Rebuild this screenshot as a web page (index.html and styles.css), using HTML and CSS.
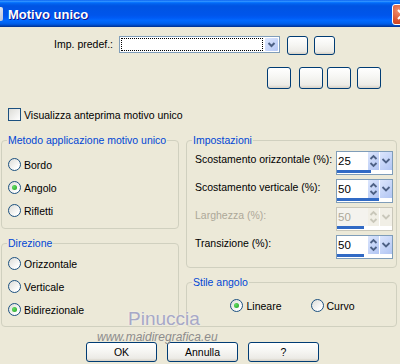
FILE: index.html
```html
<!DOCTYPE html>
<html lang="it">
<head>
  <meta charset="UTF-8">
  <meta name="viewport" content="width=device-width, initial-scale=1.0">
  <title>Motivo unico</title>
  <link rel="stylesheet" href="styles.css">
</head>
<body>

  <div class="dialog">

    <!-- Title bar -->
    <div class="titlebar">
      <span class="app-icon"></span>
      <span class="title">Motivo unico</span>
      <span class="close-btn">
        <svg width="21" height="21" viewBox="0 0 21 21"><path d="M6 6 L15 15 M15 6 L6 15" stroke="#fff" stroke-width="2" fill="none"/></svg>
      </span>
    </div>

    <!-- Preset row -->
    <div class="preset-row">
      <span class="preset-label">Imp. predef.:</span>
      <div class="combo">
        <div class="combo-field"></div>
        <span class="drop-btn">
          <svg width="13" height="13" viewBox="0 0 13 13"><polyline points="3.5,5 6.5,8 9.5,5" stroke="#4d6185" stroke-width="2" fill="none"/></svg>
        </span>
      </div>
      <button class="xp-btn small-btn"></button>
      <button class="xp-btn small-btn"></button>
    </div>

    <!-- Tool buttons -->
    <div class="tool-row">
      <button class="xp-btn tool-btn"></button>
      <button class="xp-btn tool-btn wide-gap"></button>
      <button class="xp-btn tool-btn"></button>
      <button class="xp-btn tool-btn mid-gap"></button>
    </div>

    <label class="check-row"><span class="checkbox"></span>Visualizza anteprima motivo unico</label>

    <div class="groups">
      <div class="col col-left">
        <fieldset class="group group-method">
          <legend>Metodo applicazione motivo unico</legend>
          <div class="radio-list">
            <div class="radio-row"><span class="radio"></span>Bordo</div>
            <div class="radio-row"><span class="radio checked"></span>Angolo</div>
            <div class="radio-row"><span class="radio"></span>Rifletti</div>
          </div>
        </fieldset>

        <fieldset class="group group-dir">
          <legend>Direzione</legend>
          <div class="radio-list">
            <div class="radio-row"><span class="radio"></span>Orizzontale</div>
            <div class="radio-row"><span class="radio"></span>Verticale</div>
            <div class="radio-row"><span class="radio checked"></span>Bidirezionale</div>
          </div>
        </fieldset>
      </div>

      <div class="col col-right">
        <fieldset class="group group-settings">
          <legend>Impostazioni</legend>
          <div class="field-list">
            <div class="field-row">
              <span class="field-label">Scostamento orizzontale (%):</span>
              <div class="spin">
                <div class="spin-top">
                  <span class="spin-value">25</span>
                  <span class="spin-arrows"><svg width="11" height="18" viewBox="0 0 11 18"><polyline points="2.5,7 5.5,4 8.5,7" /><polyline points="2.5,11 5.5,14 8.5,11" /></svg></span>
                  <span class="spin-drop"><svg width="12" height="18" viewBox="0 0 12 18"><polyline points="2.5,7 6,10.5 9.5,7" /></svg></span>
                </div>
                <div class="spin-bar"><span style="width:34px"></span></div>
              </div>
            </div>
            <div class="field-row">
              <span class="field-label">Scostamento verticale (%):</span>
              <div class="spin">
                <div class="spin-top">
                  <span class="spin-value">50</span>
                  <span class="spin-arrows"><svg width="11" height="18" viewBox="0 0 11 18"><polyline points="2.5,7 5.5,4 8.5,7" /><polyline points="2.5,11 5.5,14 8.5,11" /></svg></span>
                  <span class="spin-drop"><svg width="12" height="18" viewBox="0 0 12 18"><polyline points="2.5,7 6,10.5 9.5,7" /></svg></span>
                </div>
                <div class="spin-bar"><span style="width:42px"></span></div>
              </div>
            </div>
            <div class="field-row disabled">
              <span class="field-label">Larghezza (%):</span>
              <div class="spin">
                <div class="spin-top">
                  <span class="spin-value">50</span>
                  <span class="spin-arrows"><svg width="11" height="18" viewBox="0 0 11 18"><polyline points="2.5,7 5.5,4 8.5,7" /><polyline points="2.5,11 5.5,14 8.5,11" /></svg></span>
                  <span class="spin-drop"><svg width="12" height="18" viewBox="0 0 12 18"><polyline points="2.5,7 6,10.5 9.5,7" /></svg></span>
                </div>
                <div class="spin-bar"><span style="width:27px"></span></div>
              </div>
            </div>
            <div class="field-row">
              <span class="field-label">Transizione (%):</span>
              <div class="spin">
                <div class="spin-top">
                  <span class="spin-value">50</span>
                  <span class="spin-arrows"><svg width="11" height="18" viewBox="0 0 11 18"><polyline points="2.5,7 5.5,4 8.5,7" /><polyline points="2.5,11 5.5,14 8.5,11" /></svg></span>
                  <span class="spin-drop"><svg width="12" height="18" viewBox="0 0 12 18"><polyline points="2.5,7 6,10.5 9.5,7" /></svg></span>
                </div>
                <div class="spin-bar"><span style="width:27px"></span></div>
              </div>
            </div>
          </div>
        </fieldset>

        <fieldset class="group group-corner">
          <legend>Stile angolo</legend>
          <div class="corner-options">
            <div class="radio-row"><span class="radio checked"></span>Lineare</div>
            <div class="radio-row"><span class="radio"></span>Curvo</div>
          </div>
        </fieldset>
      </div>
    </div>

    <!-- Dialog buttons -->
    <div class="actions">
      <button class="xp-btn action-btn">OK</button>
      <button class="xp-btn action-btn">Annulla</button>
      <button class="xp-btn action-btn">?</button>
    </div>

    <!-- Watermark over the bottom -->
    <div class="watermark">
      <div class="wm-name">Pinuccia</div>
      <div class="wm-site">www.maidiregrafica.eu</div>
    </div>

  </div>

</body>
</html>
```

FILE: styles.css
```css
/* Base */
* {
  margin: 0;
  padding: 0;
  box-sizing: border-box;
}

body {
  width: 400px;
  height: 364px;
  overflow: hidden;
  background-color: #ece9d8;
  font-family: 'Liberation Sans', Arial, sans-serif;
  font-size: 10.5px;
  color: #000;
}

.dialog {
  position: relative;
  height: 364px;
}

/* Title bar */
.titlebar {
  height: 27px;
  display: flex;
  align-items: center;
  background: linear-gradient(to bottom,
    #0058ee 0%, #3593ff 4%, #288eff 6%, #127dff 8%, #036ffc 10%,
    #0262ee 14%, #0057e5 20%, #0054e3 24%, #0055eb 56%, #005bf5 66%,
    #026afe 76%, #0062ef 86%, #0052d6 92%, #0040ab 96%, #003092 100%);
}

.app-icon {
  width: 16px;
  height: 14px;
  margin-left: -13px;
  margin-top: 1px;
  border-radius: 2px;
  background: linear-gradient(135deg, #ffffff, #b9c3d6);
}

.title {
  margin-left: 5px;
  padding-top: 2px;
  font-size: 13px;
  font-weight: bold;
  color: #fff;
  text-shadow: 1px 1px #0f1089;
}

.close-btn {
  margin-left: auto;
  margin-right: -13px;
  margin-top: 2px;
  width: 21px;
  height: 21px;
  border: 1px solid #fff;
  border-radius: 3px;
  background: radial-gradient(circle at 30% 30%, #f09070, #d8502e 55%, #b9320f);
}

.close-btn svg {
  display: block;
  margin: -1px;
}

/* XP buttons */
.xp-btn {
  border: 1px solid #003c74;
  border-radius: 3px;
  background: linear-gradient(to bottom, #ffffff 0%, #f6f6f3 45%, #ecebe6 85%, #d6d0c5 100%);
  font: inherit;
  color: #000;
}

/* Preset row */
.preset-row {
  display: flex;
  align-items: flex-start;
  height: 19px;
  margin-top: 9px;
}

.preset-label {
  width: 113px;
  text-align: right;
  line-height: 17px;
}

.combo {
  display: flex;
  width: 161px;
  height: 17px;
  margin-left: 6px;
  padding: 1px;
  border: 1px solid #7f9db9;
  background-color: #fff;
}

.combo-field {
  flex: 1;
  margin-right: 2px;
  border: 1px dotted #000;
}

.drop-btn {
  width: 13px;
  border-radius: 1px;
  background: linear-gradient(135deg, #dde7fd, #b4c7f5);
}

.drop-btn svg {
  display: block;
}

.small-btn {
  width: 21px;
  height: 19px;
  margin-left: 7px;
}

.small-btn + .small-btn {
  margin-left: 6px;
}

/* Tool buttons */
.tool-row {
  display: flex;
  height: 22px;
  margin-top: 12px;
  padding-left: 267px;
  gap: 4px;
}

.tool-btn {
  width: 24px;
  height: 22px;
}

.tool-btn.wide-gap {
  margin-left: 4px;
}

.tool-btn.mid-gap {
  margin-left: 2px;
}

/* Preview checkbox */
.check-row {
  display: flex;
  align-items: center;
  gap: 3px;
  height: 13px;
  margin-top: 19px;
  padding-left: 8px;
}

.checkbox {
  width: 13px;
  height: 13px;
  border: 1px solid #1c5180;
  background: linear-gradient(135deg, #dcdcd7, #ffffff);
}

/* Groups */
.groups {
  display: flex;
  gap: 7px;
  margin-top: 13px;
  padding-left: 1px;
}

.col {
  display: flex;
  flex-direction: column;
  gap: 8px;
}

.col-left {
  width: 178px;
}

.col-right {
  width: 211px;
}

.group {
  min-width: 0;
  padding: 0 3px 0 5px;
  border: 1px solid #d0d0bf;
  border-radius: 4px;
}

.group legend {
  padding: 0 1px;
  line-height: 13px;
  color: #0046d5;
}

.group-method {
  padding-top: 6px;
  padding-bottom: 6px;
}

.group-dir {
  padding-top: 2px;
  padding-bottom: 5px;
}

.group-settings {
  padding-top: 4px;
  padding-bottom: 8px;
}

.group-corner {
  padding-top: 5px;
  padding-bottom: 9px;
}

.radio-list {
  padding-left: 1px;
}

.radio-row {
  display: flex;
  align-items: center;
  gap: 3px;
  height: 23px;
}

.radio {
  display: flex;
  align-items: center;
  justify-content: center;
  flex: none;
  width: 13px;
  height: 13px;
  border: 1px solid #1c5180;
  border-radius: 50%;
  background: linear-gradient(135deg, #dcdcd7, #ffffff 80%);
}

.radio.checked::after {
  content: '';
  width: 5px;
  height: 5px;
  border-radius: 50%;
  background: radial-gradient(circle at 35% 35%, #62dc62, #21a121);
}

.corner-options {
  display: flex;
  justify-content: center;
  gap: 29px;
}

/* Settings rows */
.field-list {
  display: flex;
  flex-direction: column;
  gap: 4px;
}

.field-row {
  display: flex;
  height: 24px;
  padding-left: 3px;
}

.field-label {
  flex: 1;
  line-height: 17px;
}

.field-row.disabled .field-label {
  color: #aca899;
}

/* Spin box */
.spin {
  flex: none;
  width: 57px;
  height: 24px;
  border: 1px solid #7f9db9;
  background-color: #fff;
}

.spin-top {
  display: flex;
  height: 18px;
}

.spin-value {
  width: 31px;
  padding-left: 1px;
  font-size: 11.5px;
  line-height: 18px;
}

.spin-arrows,
.spin-drop {
  background: linear-gradient(135deg, #dce6fd, #b1c5f3);
}

.spin-arrows {
  width: 11px;
}

.spin-drop {
  width: 13px;
  border-left: 1px solid #fff;
}

.spin svg {
  display: block;
}

.spin polyline {
  fill: none;
  stroke: #4d6185;
  stroke-width: 1.8;
}

.spin-bar {
  height: 3px;
}

.spin-bar span {
  display: block;
  height: 3px;
  background-color: #316ac5;
}

.field-row.disabled .spin {
  border-color: #c9c7ba;
}

.field-row.disabled .spin-top {
  background-color: #f4f3ee;
}

.field-row.disabled .spin-value {
  color: #aca899;
}

.field-row.disabled .spin-arrows,
.field-row.disabled .spin-drop {
  background: #f1efe6;
}

.field-row.disabled .spin polyline {
  stroke: #c9c7ba;
}

/* Dialog buttons */
.actions {
  display: flex;
  gap: 10px;
  margin-top: 15px;
  padding-left: 86px;
}

.action-btn {
  width: 71px;
  height: 20px;
}

/* Watermark */
.watermark {
  position: absolute;
  left: 97px;
  top: 308px;
  width: 124px;
  pointer-events: none;
}

.wm-name {
  padding-left: 31px;
  font-size: 19px;
  line-height: 22px;
  color: #a7a8c6;
  text-shadow: 0 0 2px #f4f4f4;
}

.wm-site {
  font-size: 12px;
  font-style: italic;
  line-height: 14px;
  color: #8c8c8c;
}
```
